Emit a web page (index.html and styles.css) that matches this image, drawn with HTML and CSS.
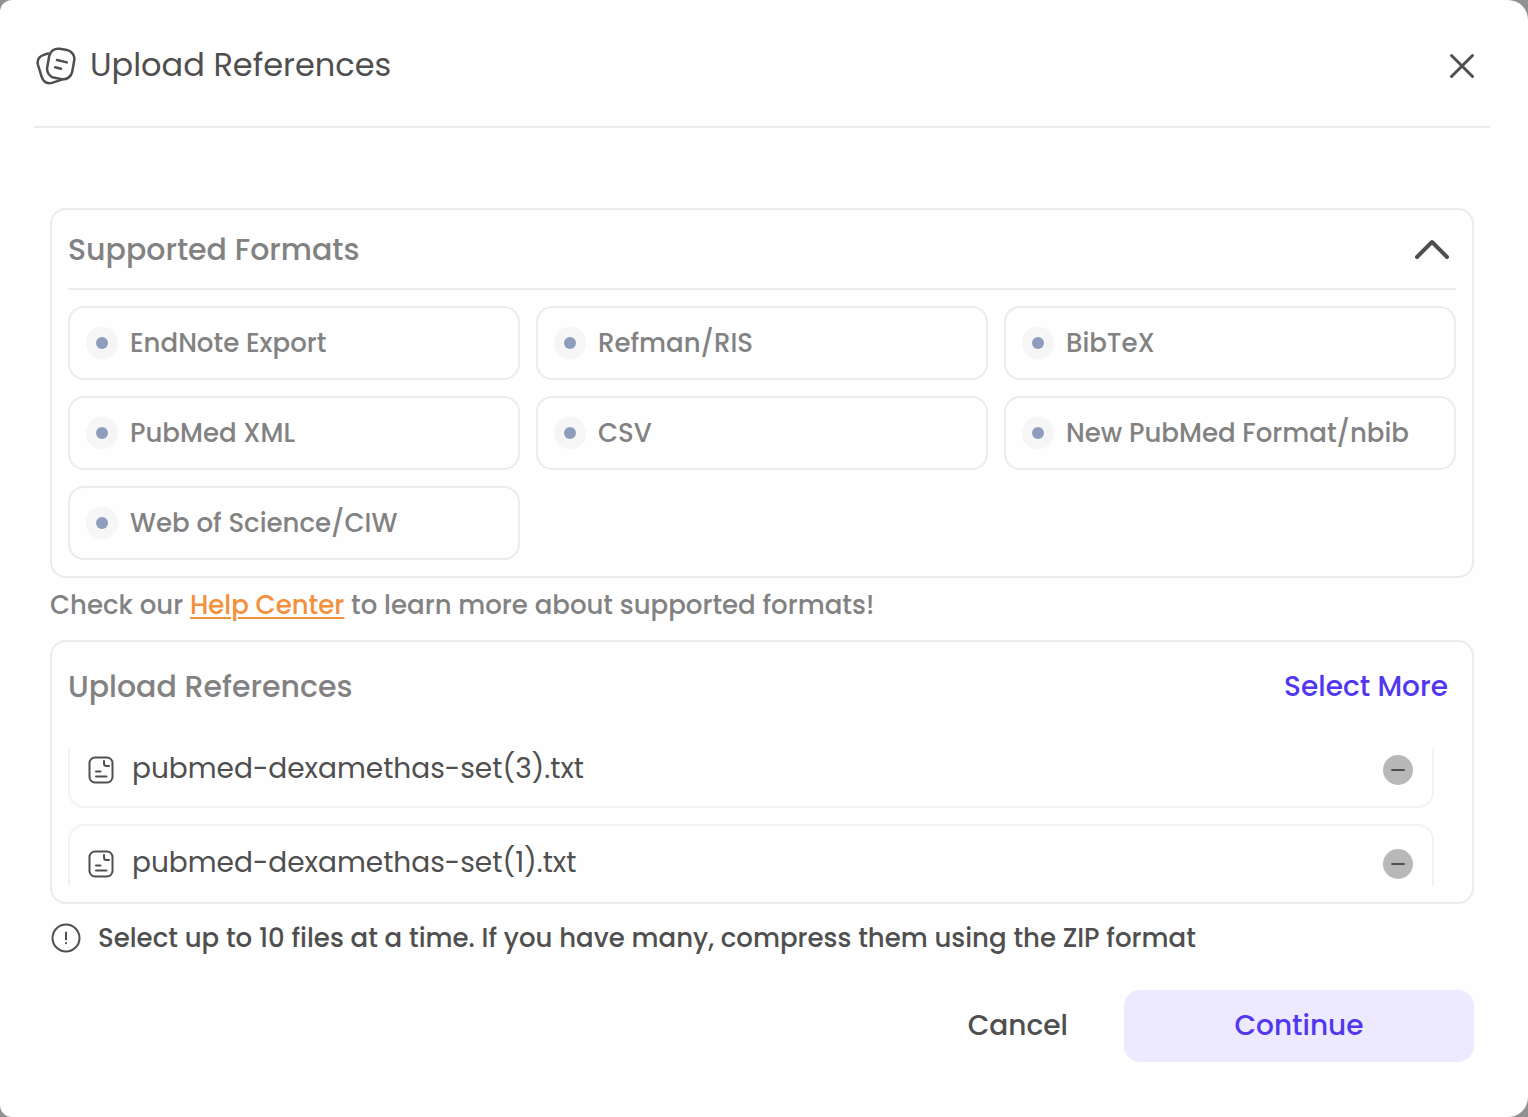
FILE: index.html
```html
<!DOCTYPE html>
<html lang="en">
<head>
<meta charset="utf-8">
<title>Upload References</title>
<link rel="stylesheet" href="styles.css">
</head>
<body>
<main class="modal">
  <header class="modal-header">
    <svg class="title-icon" viewBox="0 0 40 40" fill="none" stroke="currentColor" stroke-width="2.5" stroke-linecap="round" stroke-linejoin="round" aria-hidden="true">
      <rect x="12" y="3.200" width="25.400" height="29.500" rx="9" transform="rotate(10 24.700 18)"/>
      <path d="M12 7.500 7.800 8.900Q0.400 11.400 1.900 18.500L5.600 30.600Q8.200 38.600 16 36.900L26 33.600"/>
      <path d="M21 14 30.800 16.400M19.200 21.200 25 22.700"/>
    </svg>
    <h1 class="modal-title">Upload References</h1>
    <button class="icon-button" type="button" aria-label="Close">
      <svg class="close-icon" viewBox="0 0 26 26" fill="none" stroke="currentColor" stroke-width="3" stroke-linecap="round" aria-hidden="true"><path d="M2.500 2.500 23.500 23.500M23.500 2.500 2.500 23.500"/></svg>
    </button>
  </header>

  <div class="modal-body">
    <section class="card">
      <div class="card-header card-header-ruled">
        <h2 class="card-title">Supported Formats</h2>
        <button class="icon-button" type="button" aria-label="Collapse supported formats" aria-expanded="true">
          <svg class="chevron-icon" viewBox="0 0 36 22" fill="none" stroke="currentColor" stroke-width="4" stroke-linecap="round" stroke-linejoin="round" aria-hidden="true"><path d="M3 18 18 3 33 18"/></svg>
        </button>
      </div>
      <ul class="formats">
        <li class="format">EndNote Export</li>
        <li class="format">Refman/RIS</li>
        <li class="format">BibTeX</li>
        <li class="format">PubMed XML</li>
        <li class="format">CSV</li>
        <li class="format">New PubMed Format/nbib</li>
        <li class="format">Web of Science/CIW</li>
      </ul>
    </section>

    <p class="help">Check our <a class="help-link" href="#">Help Center</a> to learn more about supported formats!</p>

    <section class="card">
      <div class="card-header card-header-upload">
        <h2 class="card-title">Upload References</h2>
        <button class="text-button" type="button">Select More</button>
      </div>
      <div class="file-window">
        <ul class="files">
          <li class="file">
            <svg class="file-icon" viewBox="0 0 26 28" fill="none" stroke="currentColor" stroke-width="2" stroke-linecap="round" stroke-linejoin="round" aria-hidden="true"><rect x="1.500" y="1.500" width="23" height="25" rx="5.500"/><path d="M16 5V7.500Q16 10 18.500 10H21M8 15.500H12.500M8 20.500H18.500"/></svg>
            <span class="file-name">pubmed-dexamethas-set(3).txt</span>
            <button class="remove" type="button" aria-label="Remove pubmed-dexamethas-set(3).txt"></button>
          </li>
          <li class="file">
            <svg class="file-icon" viewBox="0 0 26 28" fill="none" stroke="currentColor" stroke-width="2" stroke-linecap="round" stroke-linejoin="round" aria-hidden="true"><rect x="1.500" y="1.500" width="23" height="25" rx="5.500"/><path d="M16 5V7.500Q16 10 18.500 10H21M8 15.500H12.500M8 20.500H18.500"/></svg>
            <span class="file-name">pubmed-dexamethas-set(1).txt</span>
            <button class="remove" type="button" aria-label="Remove pubmed-dexamethas-set(1).txt"></button>
          </li>
        </ul>
      </div>
    </section>

    <p class="note">
      <svg class="note-icon" viewBox="0 0 32 32" fill="none" stroke="currentColor" stroke-width="2" stroke-linecap="round" aria-hidden="true"><circle cx="16" cy="16" r="13.500"/><path d="M16 10.500V17.500M16 21V21.200"/></svg>
      <span>Select up to 10 files at a time. If you have many, compress them using the ZIP format</span>
    </p>

    <footer class="actions">
      <button class="button" type="button">Cancel</button>
      <button class="button button-primary" type="button">Continue</button>
    </footer>
  </div>
</main>
</body>
</html>
```
FILE: styles.css
```css
*{box-sizing:border-box}
body{margin:0;background:#919191;color:#4f4f4f;font-family:Poppins,Inter,"Liberation Sans",sans-serif;font-size:26px;line-height:36px}
h1,h2,p,ul{margin:0;padding:0}
ul{list-style:none}
button{padding:0;border:0;background:none;color:inherit;font:inherit;cursor:pointer}
svg{display:block;flex:none}
.modal{min-height:100vh;padding:0 38px 54px 34px;background:#fefefe;border-radius:12px 20px 20px 12px}
.modal-header{display:flex;align-items:center;gap:14px;height:128px;padding:6px 15px 0 2px;border-bottom:2px solid #ebebeb}
.title-icon{width:40px;height:40px}
.modal-title{flex:1;padding-bottom:2px;font-size:32px;font-weight:400;line-height:48px}
.icon-button{display:flex}
.close-icon{width:26px;height:26px}
.chevron-icon{width:36px;height:22px}
.modal-body{padding:80px 16px 0}
.card{padding:0 16px 16px;border:2px solid #ebebeb;border-radius:16px}
.card-header{display:flex;align-items:center;justify-content:space-between}
.card-header-ruled{height:80px;padding:2px 6px 0 0;border-bottom:2px solid #ebebeb}
.card-header-upload{height:106px;padding:0 8px 16px 0}
.card-title{color:#828282;font-size:30px;font-weight:500;line-height:40px}
.formats{display:grid;grid-template-columns:repeat(3,1fr);gap:16px;padding-top:16px}
.format{display:flex;align-items:center;gap:12px;height:74px;padding:0 16px;border:2px solid #ebebeb;border-radius:16px;color:#828282;font-weight:500}
.format::before{content:"";flex:none;width:12px;height:12px;margin:10px;border-radius:50%;background:#8f9dbc;box-shadow:0 0 0 10px #f6f6f7}
.help{padding:9px 0 17px;color:#828282;font-weight:500}
.help-link{color:#f2903c;text-decoration-thickness:2px;text-underline-offset:3px}
.text-button{color:#5138ee;font-size:28px;font-weight:500}
.file-window{height:138px;padding-right:22px;overflow:hidden}
.files{display:grid;gap:16px;margin-top:-18px}
.file{display:flex;align-items:center;gap:18px;height:78px;padding:2px 19px 0 18px;border:2px solid #f2f2f2;border-radius:16px;font-size:28px}
.file-icon{width:26px;height:28px}
.file-name{flex:1;padding-bottom:2px}
.remove{display:flex;align-items:center;justify-content:center;width:30px;height:30px;border-radius:50%;background:#b8b8b8}
.remove::before{content:"";width:14px;height:2px;border-radius:1px;background:#4f4f4f}
.note{display:flex;align-items:center;gap:16px;padding-top:16px;font-weight:500}
.note-icon{width:32px;height:32px}
.actions{display:flex;justify-content:flex-end;gap:24px;padding-top:34px}
.button{height:72px;padding:0 32px;border-radius:16px;font-size:28px;font-weight:500}
.button-primary{width:350px;background:#edeaff;color:#5138ee}
```
